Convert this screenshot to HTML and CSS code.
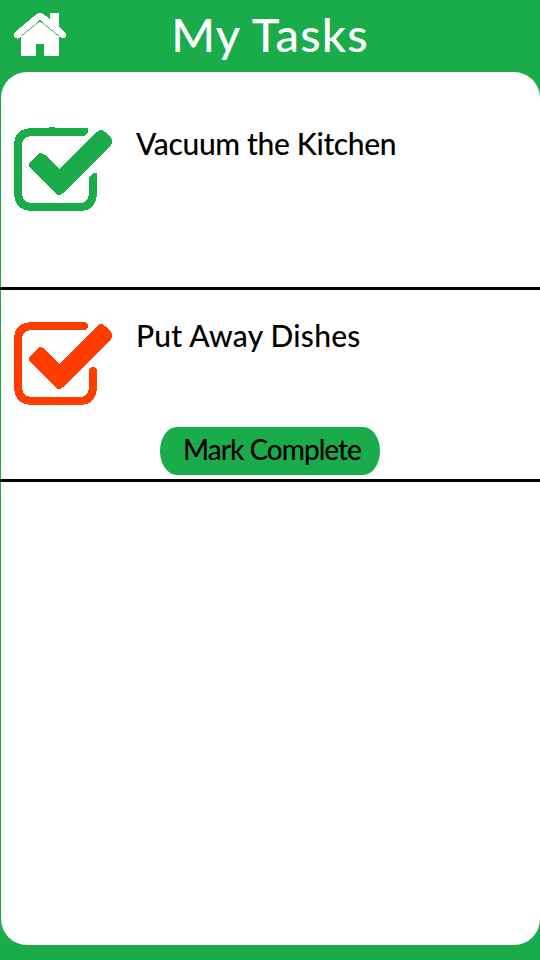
FILE: index.html
```html
<!DOCTYPE html>
<html lang="en">
<head>
<meta charset="utf-8">
<title>My Tasks</title>
<link rel="stylesheet" href="styles.css">
</head>
<body>
<div class="app">
  <header class="header">
    <svg class="home" viewBox="0 0 52 44" aria-hidden="true">
      <path d="M7 43V22L26 7.5L45 22V43H30V31H22V43Z"/>
      <path d="M36 0H45V14L51 19.5Q53 22 51 24.5Q49 26 46 24L26 7L5 25Q3 26.500 1 24.500Q-1 22 1 19L22 1.500Q26-1.500 30 1.500L36 6Z"/>
      <path class="seam" d="M7 23L26 8L45 23"/>
    </svg>
    <h1 class="title"><span class="fit title-text">My Tasks</span></h1>
  </header>
  <main class="panel">
    <section class="task">
      <svg class="check done" viewBox="0 0 98 84" aria-hidden="true">
        <path class="box" d="M71 5H19Q4 5 4 19V65Q4 80 19 80H65Q79 80 79 65V51"/>
        <path d="M35 0H41V2H35ZM70 1H74V5L70 9ZM75 50L79 46H83V52H75Z"/>
        <path class="tick" d="M15 36L24 27Q27 25 31 28L45.500 42L83 5Q87 1 91 5L97 11Q99 14 97 18L49 66Q45 70 41 66L16 41Q14 38 15 36Z"/>
      </svg>
      <h2 class="name"><span class="fit vacuum">Vacuum the Kitchen</span></h2>
    </section>
    <section class="task">
      <svg class="check pending" viewBox="0 0 98 84" aria-hidden="true">
        <path class="box round" d="M70 5H19Q4 5 4 19V65Q4 80 19 80H65Q79 80 79 65V50"/>
        <path class="tick" d="M15 36L24 27Q27 25 31 28L45.500 43L83 5Q87 1 91 5L97 11Q99 14 97 18L49 66Q45 70 41 66L16 41Q14 38 15 36Z"/>
      </svg>
      <h2 class="name"><span class="fit dishes">Put Away Dishes</span></h2>
      <button class="complete"><span class="fit">Mark Complete</span></button>
    </section>
  </main>
</div>
</body>
</html>
```

FILE: styles.css
```css
* { box-sizing: border-box; }

body {
  margin: 0;
  background: #1aac4b;
  font-family: "Comic Sans MS", Lato, sans-serif;
}

.app {
  height: 960px;
  display: grid;
  grid-template-rows: 72px 873px;
}

.header {
  display: grid;
  grid-template-columns: 52px 1fr 52px;
  padding: 0 14px;
}

.home {
  width: 52px;
  height: 44px;
  margin-top: 13px;
  fill: #fff;
  shape-rendering: crispEdges;
}

.seam {
  fill: none;
  stroke: #1aac4b;
  stroke-width: 0.9;
}

.title {
  margin: 0;
  color: #fff;
  font-size: 47px;
  font-weight: 500;
  line-height: 68px;
  letter-spacing: 1.2px;
  text-align: center;
}

.fit {
  display: inline-block;
  white-space: nowrap;
}

.panel {
  margin-left: 1px;
  background: #fff;
  border-radius: 26px;
}

.task {
  display: grid;
  grid-template-columns: 98px 1fr;
  grid-template-rows: 137px 1fr;
  column-gap: 24px;
  height: 192px;
  margin-left: -1px;
  padding: 0 14px;
  border-bottom: 3px solid #000;
}

.task:first-child { height: 218px; }

.check {
  width: 98px;
  height: 84px;
  margin-top: 31px;
  shape-rendering: crispEdges;
}

.task:first-child .check { margin-top: 55px; }

.done { fill: #1aac4b; stroke: #1aac4b; }
.pending { fill: #ff3d00; stroke: #ff3d00; }
.check path { stroke-width: 0; }
.check .box { fill: none; stroke-width: 8; }
.check .round { stroke-linecap: round; }

.name {
  margin: 24px 0 0;
  color: #000;
  font-size: 30px;
  font-weight: 500;
  line-height: 42px;
}

.task:first-child .name { margin-top: 50px; }

.vacuum { letter-spacing: -0.35px; }
.dishes { letter-spacing: 0.25px; }

.complete {
  grid-column: 1 / -1;
  justify-self: center;
  width: 220px;
  height: 48px;
  padding: 0 0 3px 4px;
  border: 0;
  border-radius: 17px / 24px;
  background: #1aac4b;
  color: #000;
  font: 500 28px/45px "Comic Sans MS", Lato, sans-serif;
  letter-spacing: -1px;
}
```
